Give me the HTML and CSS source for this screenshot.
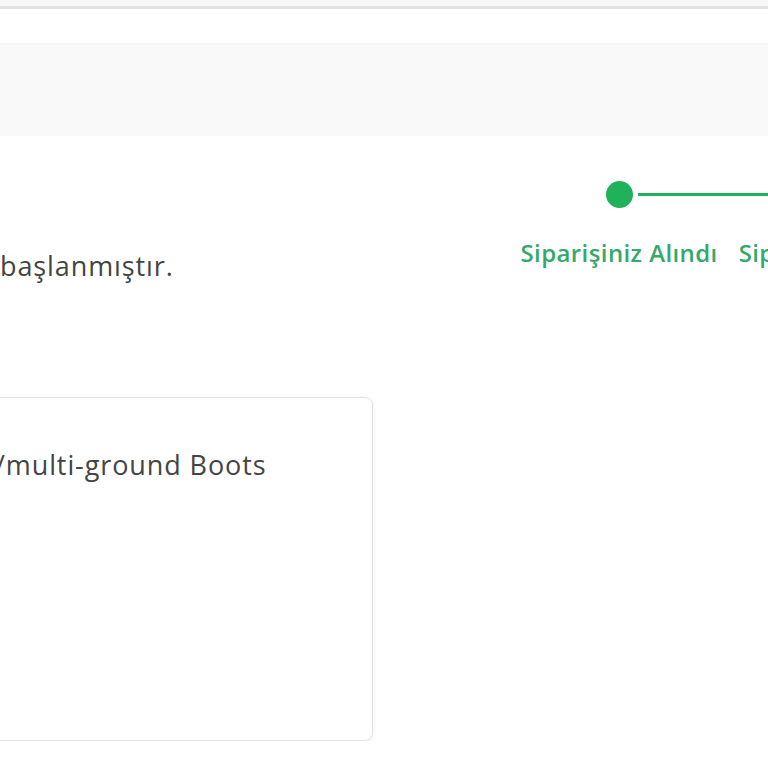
FILE: index.html
```html
<!DOCTYPE html>
<html lang="tr">
<head>
    <meta charset="UTF-8">
    <meta name="viewport" content="width=device-width, initial-scale=1.0">
    <title>Sipariş Detayı</title>
    <link rel="stylesheet" href="styles.css">
</head>
<body>
    <div class="topbar"></div>
    <div class="page-head"></div>

    <div class="order">
        <div class="order-info">
            <p class="order-status">başlanmıştır.</p>
        </div>
        <div class="steps">
            <div class="step step-done">
                <div class="step-track"><span class="step-dot"></span></div>
                <div class="step-label">Siparişiniz Alındı</div>
            </div>
            <div class="step step-done">
                <div class="step-track"><span class="step-dot"></span></div>
                <div class="step-label">Siparişiniz Hazırlanıyor</div>
            </div>
        </div>
    </div>

    <div class="product-card">
        <div class="product-name">/multi-ground Boots</div>
    </div>
</body>
</html>
```

FILE: styles.css
```css
* {
    margin: 0;
    padding: 0;
    box-sizing: border-box;
}

body {
    font-family: 'Open Sans', 'Noto Sans', sans-serif;
    background: #fff;
    color: #444;
    overflow: hidden;
}

.topbar {
    height: 9px;
    background: #f8f8f8;
    border-bottom: 3px solid #e3e3e3;
}

.page-head {
    height: 93px;
    margin-top: 34px;
    background: #f9f9f9;
    border-top: 1px solid #f3f3f3;
}

.order {
    display: flex;
    height: 261px;
}

.order-info {
    width: 510px;
    flex-shrink: 0;
    padding-top: 113px;
}

.order-status {
    font-size: 27px;
    line-height: 34px;
    letter-spacing: 0.9px;
    color: #444;
}

.steps {
    display: flex;
    padding-top: 45px;
}

.step {
    flex-shrink: 0;
    padding: 0 10.5px;
    display: flex;
    flex-direction: column;
    align-items: center;
}

.step-track {
    width: calc(100% + 21px);
    display: flex;
    align-items: center;
    gap: 5px;
}

.step-track::before,
.step-track::after {
    content: '';
    flex: 1;
    height: 3px;
    background: #1fb25a;
}

.step:first-child .step-track::before {
    background: transparent;
}

.step-dot {
    width: 27px;
    height: 27px;
    border-radius: 50%;
    background: #1fb25a;
}

.step-label {
    margin-top: 28px;
    font-size: 24px;
    font-weight: 600;
    letter-spacing: 0.4px;
    color: #35a96a;
    white-space: nowrap;
}

.product-card {
    width: 393px;
    height: 344px;
    margin-left: -20px;
    border: 1px solid #e2e2e2;
    border-radius: 8px;
    box-shadow: 0 1px 5px rgba(0, 0, 0, 0.07);
    padding: 48px 0 0 14px;
}

.product-name {
    font-size: 27px;
    letter-spacing: 0.9px;
    color: #444;
}
```
